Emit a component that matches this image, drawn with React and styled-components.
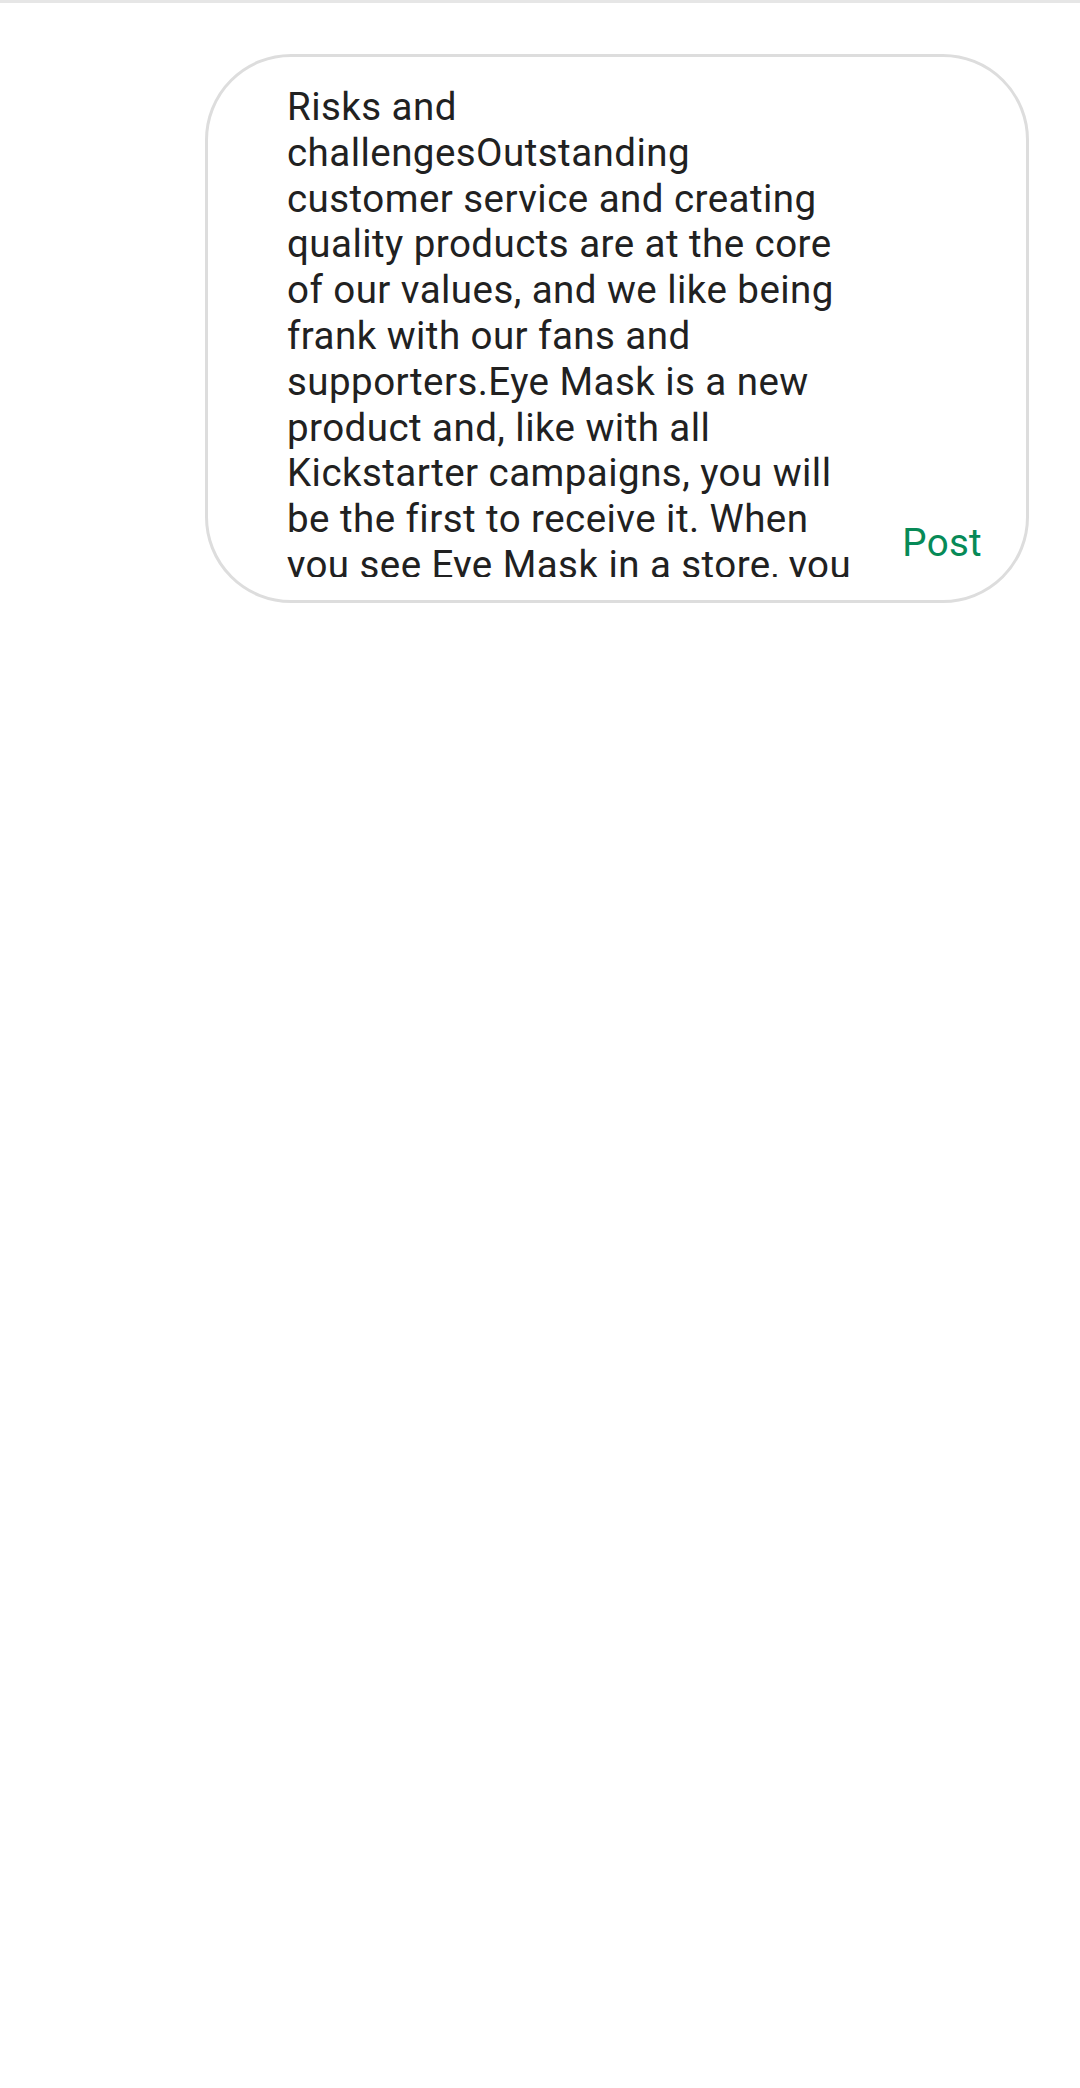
import React from "react";
import styled, { createGlobalStyle } from "styled-components";

const GlobalStyle = createGlobalStyle`
  html, body {
    margin: 0;
    padding: 0;
    background: #ffffff;
  }
  body {
    font-family: Roboto, "Noto Sans", sans-serif;
  }
`;

const Page = styled.div`
  width: 1080px;
  min-height: 2088px;
  background: #ffffff;
`;

const TopRule = styled.div`
  height: 3px;
  background: #e6e6e6;
`;

const Composer = styled.div`
  margin: 51px 51px 0 205px;
  height: 549px;
  box-sizing: border-box;
  border: 3px solid #dddddd;
  border-radius: 86px;
  display: flex;
  align-items: flex-end;
  padding: 27px 44px 23px 79px;
`;

const Input = styled.div`
  width: 580px;
  height: 493px;
  overflow: hidden;
  font-size: 38.5px;
  line-height: 45.8px;
  color: #212121;
  letter-spacing: 0.45px;
  align-self: flex-start;
`;

const PostButton = styled.button`
  margin-left: auto;
  margin-bottom: 12px;
  border: none;
  background: none;
  padding: 0;
  font-family: Roboto, sans-serif;
  font-size: 38.5px;
  line-height: 45px;
  letter-spacing: 0.3px;
  color: #078a57;
  cursor: pointer;
`;

const App = () => {
  return (
    <Page>
      <GlobalStyle />
      <TopRule />
      <Composer>
        <Input>
          Risks and challengesOutstanding
          <br />
          customer service and creating quality products are at the core of
          our values, and we like being frank with our fans and supporters.Eye
          Mask is a new product and, like with all Kickstarter campaigns, you
          will be the first to receive it. When you see Eye Mask in a store, you
          will know that our backers made it possible.
        </Input>
        <PostButton>Post</PostButton>
      </Composer>
    </Page>
  );
};

export default App;
